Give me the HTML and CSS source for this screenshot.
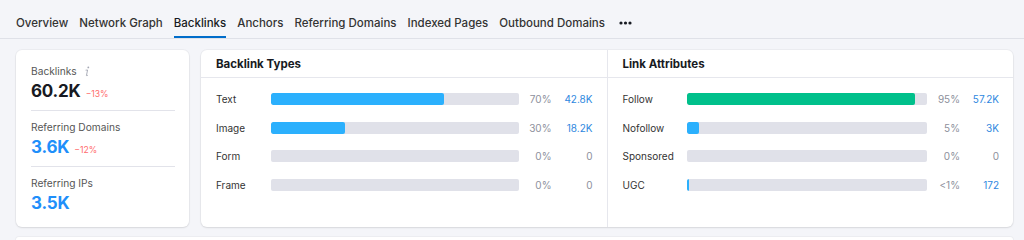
FILE: index.html
```html
<!DOCTYPE html>
<html>
<head>
<meta charset="utf-8">
<link rel="stylesheet" href="styles.css">
</head>
<body>
<nav class="tabs">
  <a class="tab">Overview</a>
  <a class="tab">Network Graph</a>
  <a class="tab active">Backlinks</a>
  <a class="tab">Anchors</a>
  <a class="tab">Referring Domains</a>
  <a class="tab">Indexed Pages</a>
  <a class="tab">Outbound Domains</a>
  <a class="tab more"><svg width="13" height="4" viewBox="0 0 13 4"><circle cx="2" cy="2" r="1.6" fill="#171a22"/><circle cx="6.5" cy="2" r="1.6" fill="#171a22"/><circle cx="11" cy="2" r="1.6" fill="#171a22"/></svg></a>
</nav>
<main class="content">
  <section class="card stats">
    <div class="stat">
      <div class="stat-label">Backlinks <svg class="info" width="6" height="11" viewBox="0 0 6 11"><circle cx="4.3" cy="1.4" r="0.9" fill="#a4a7b3"/><path d="M3.6 4 L2.4 9.6 M1.6 4.2 L3.6 4 M2.4 9.6 Q3.3 9.8 4 9" stroke="#a4a7b3" stroke-width="0.9" fill="none"/></svg></div>
      <div class="stat-row"><span class="stat-value">60.2K</span><span class="stat-delta">−13%</span></div>
    </div>
    <div class="stat">
      <div class="stat-label">Referring Domains</div>
      <div class="stat-row"><span class="stat-value blue">3.6K</span><span class="stat-delta">−12%</span></div>
    </div>
    <div class="stat">
      <div class="stat-label">Referring IPs</div>
      <div class="stat-row"><span class="stat-value blue">3.5K</span></div>
    </div>
  </section>
  <section class="card dist">
    <div class="panel panel-types">
      <h3 class="panel-title">Backlink Types</h3>
      <div class="rows">
        <div class="row"><span class="lbl">Text</span><span class="track"><span class="fill" style="width:70%"></span></span><span class="pct">70%</span><span class="val">42.8K</span></div>
        <div class="row"><span class="lbl">Image</span><span class="track"><span class="fill" style="width:30%"></span></span><span class="pct">30%</span><span class="val">18.2K</span></div>
        <div class="row"><span class="lbl">Form</span><span class="track"></span><span class="pct">0%</span><span class="val zero">0</span></div>
        <div class="row"><span class="lbl">Frame</span><span class="track"></span><span class="pct">0%</span><span class="val zero">0</span></div>
      </div>
    </div>
    <div class="panel panel-attrs">
      <h3 class="panel-title">Link Attributes</h3>
      <div class="rows">
        <div class="row"><span class="lbl">Follow</span><span class="track"><span class="fill green" style="width:95%"></span></span><span class="pct">95%</span><span class="val">57.2K</span></div>
        <div class="row"><span class="lbl">Nofollow</span><span class="track"><span class="fill" style="width:5%"></span></span><span class="pct">5%</span><span class="val">3K</span></div>
        <div class="row"><span class="lbl">Sponsored</span><span class="track"></span><span class="pct">0%</span><span class="val zero">0</span></div>
        <div class="row"><span class="lbl">UGC</span><span class="track"><span class="fill" style="width:2px"></span></span><span class="pct">&lt;1%</span><span class="val">172</span></div>
      </div>
    </div>
  </section>
</main>
<div class="next-card"></div>
</body>
</html>
```
FILE: styles.css
```css
* { box-sizing: border-box; }
html, body { margin: 0; padding: 0; }
body {
  background: #f4f5f9;
  font-family: Inter, "Noto Sans", sans-serif;
  color: #333;
  overflow: hidden;
  height: 240px;
}
.tabs {
  display: flex;
  gap: 11px;
  padding: 0 16px;
  border-bottom: 1px solid #dfe1e8;
  height: 39px;
}
.tab {
  font-size: 11.5px;
  line-height: 16px;
  padding: 15px 0 5px;
  color: #333;
  border-bottom: 2px solid transparent;
  font-weight: 450;
  white-space: nowrap;
}
.tab.active {
  color: #171a22;
  border-bottom-color: #006dca;
  font-weight: 500;
}
.tab.more { margin-left: 3px; display: flex; align-items: flex-start; padding-top: 21px; }
.content {
  display: flex;
  gap: 12px;
  padding: 11px 11px 0 16px;
}
.card {
  background: #fff;
  border-radius: 6px;
  box-shadow: 0 0 0 1px rgba(0,0,0,0.03), 0 1px 2px rgba(0,0,0,0.09);
}
.stats {
  width: 173px;
  flex: none;
  padding: 5px 14px 5px 15px;
}
.stat {
  padding: 8px 0 7px;
  border-bottom: 1px solid #e2e3ea;
}
.stat:last-child { border-bottom: none; }
.stat-label {
  font-size: 10.2px;
  line-height: 16px;
  color: #555;
  display: flex;
  align-items: center;
  gap: 4px;
}
.info { margin-left: 3px; }
.stat-row {
  display: flex;
  align-items: baseline;
  gap: 5px;
  height: 24px;
  line-height: 24px;
}
.stat-value {
  font-size: 17px;
  font-weight: 700;
  color: #171a22;
  letter-spacing: -0.2px;
}
.stat-value.blue { color: #1f8ffa; }
.stat-delta {
  font-size: 8.6px;
  color: #ff6b6b;
}
.dist {
  flex: 1;
  display: flex;
}
.panel {
  flex: 1;
  min-width: 0;
}
.panel-types { border-right: 1px solid #e6e7ed; }
.panel-title {
  margin: 0;
  height: 28px;
  line-height: 28px;
  padding: 0 15px;
  font-size: 11.5px;
  font-weight: 700;
  color: #171a22;
  border-bottom: 1px solid #e6e7ed;
}
.rows {
  padding: 7px 14px 21px 15px;
}
.row {
  display: grid;
  align-items: center;
  height: 28.6px;
  font-size: 10px;
}
.panel-types .row { grid-template-columns: 55px 1fr 33px 41px; }
.panel-attrs .row { grid-template-columns: 64px 1fr 33px 39px; }
.lbl { color: #333; white-space: nowrap; }
.track {
  display: block;
  height: 12px;
  background: #e0e1e9;
  border-radius: 2px;
  overflow: hidden;
}
.fill {
  display: block;
  height: 100%;
  background: #2bb0fd;
  border-radius: 2px;
}
.fill.green { background: #00c08b; }
.pct { text-align: right; color: #8d909c; }
.val { text-align: right; color: #2f88e0; }
.val.zero { color: #8d909c; }
.next-card {
  margin: 10px 11px 0 16px;
  height: 3px;
  background: #fff;
  border-radius: 6px 6px 0 0;
  box-shadow: 0 0 0 1px rgba(0,0,0,0.03);
}
```
